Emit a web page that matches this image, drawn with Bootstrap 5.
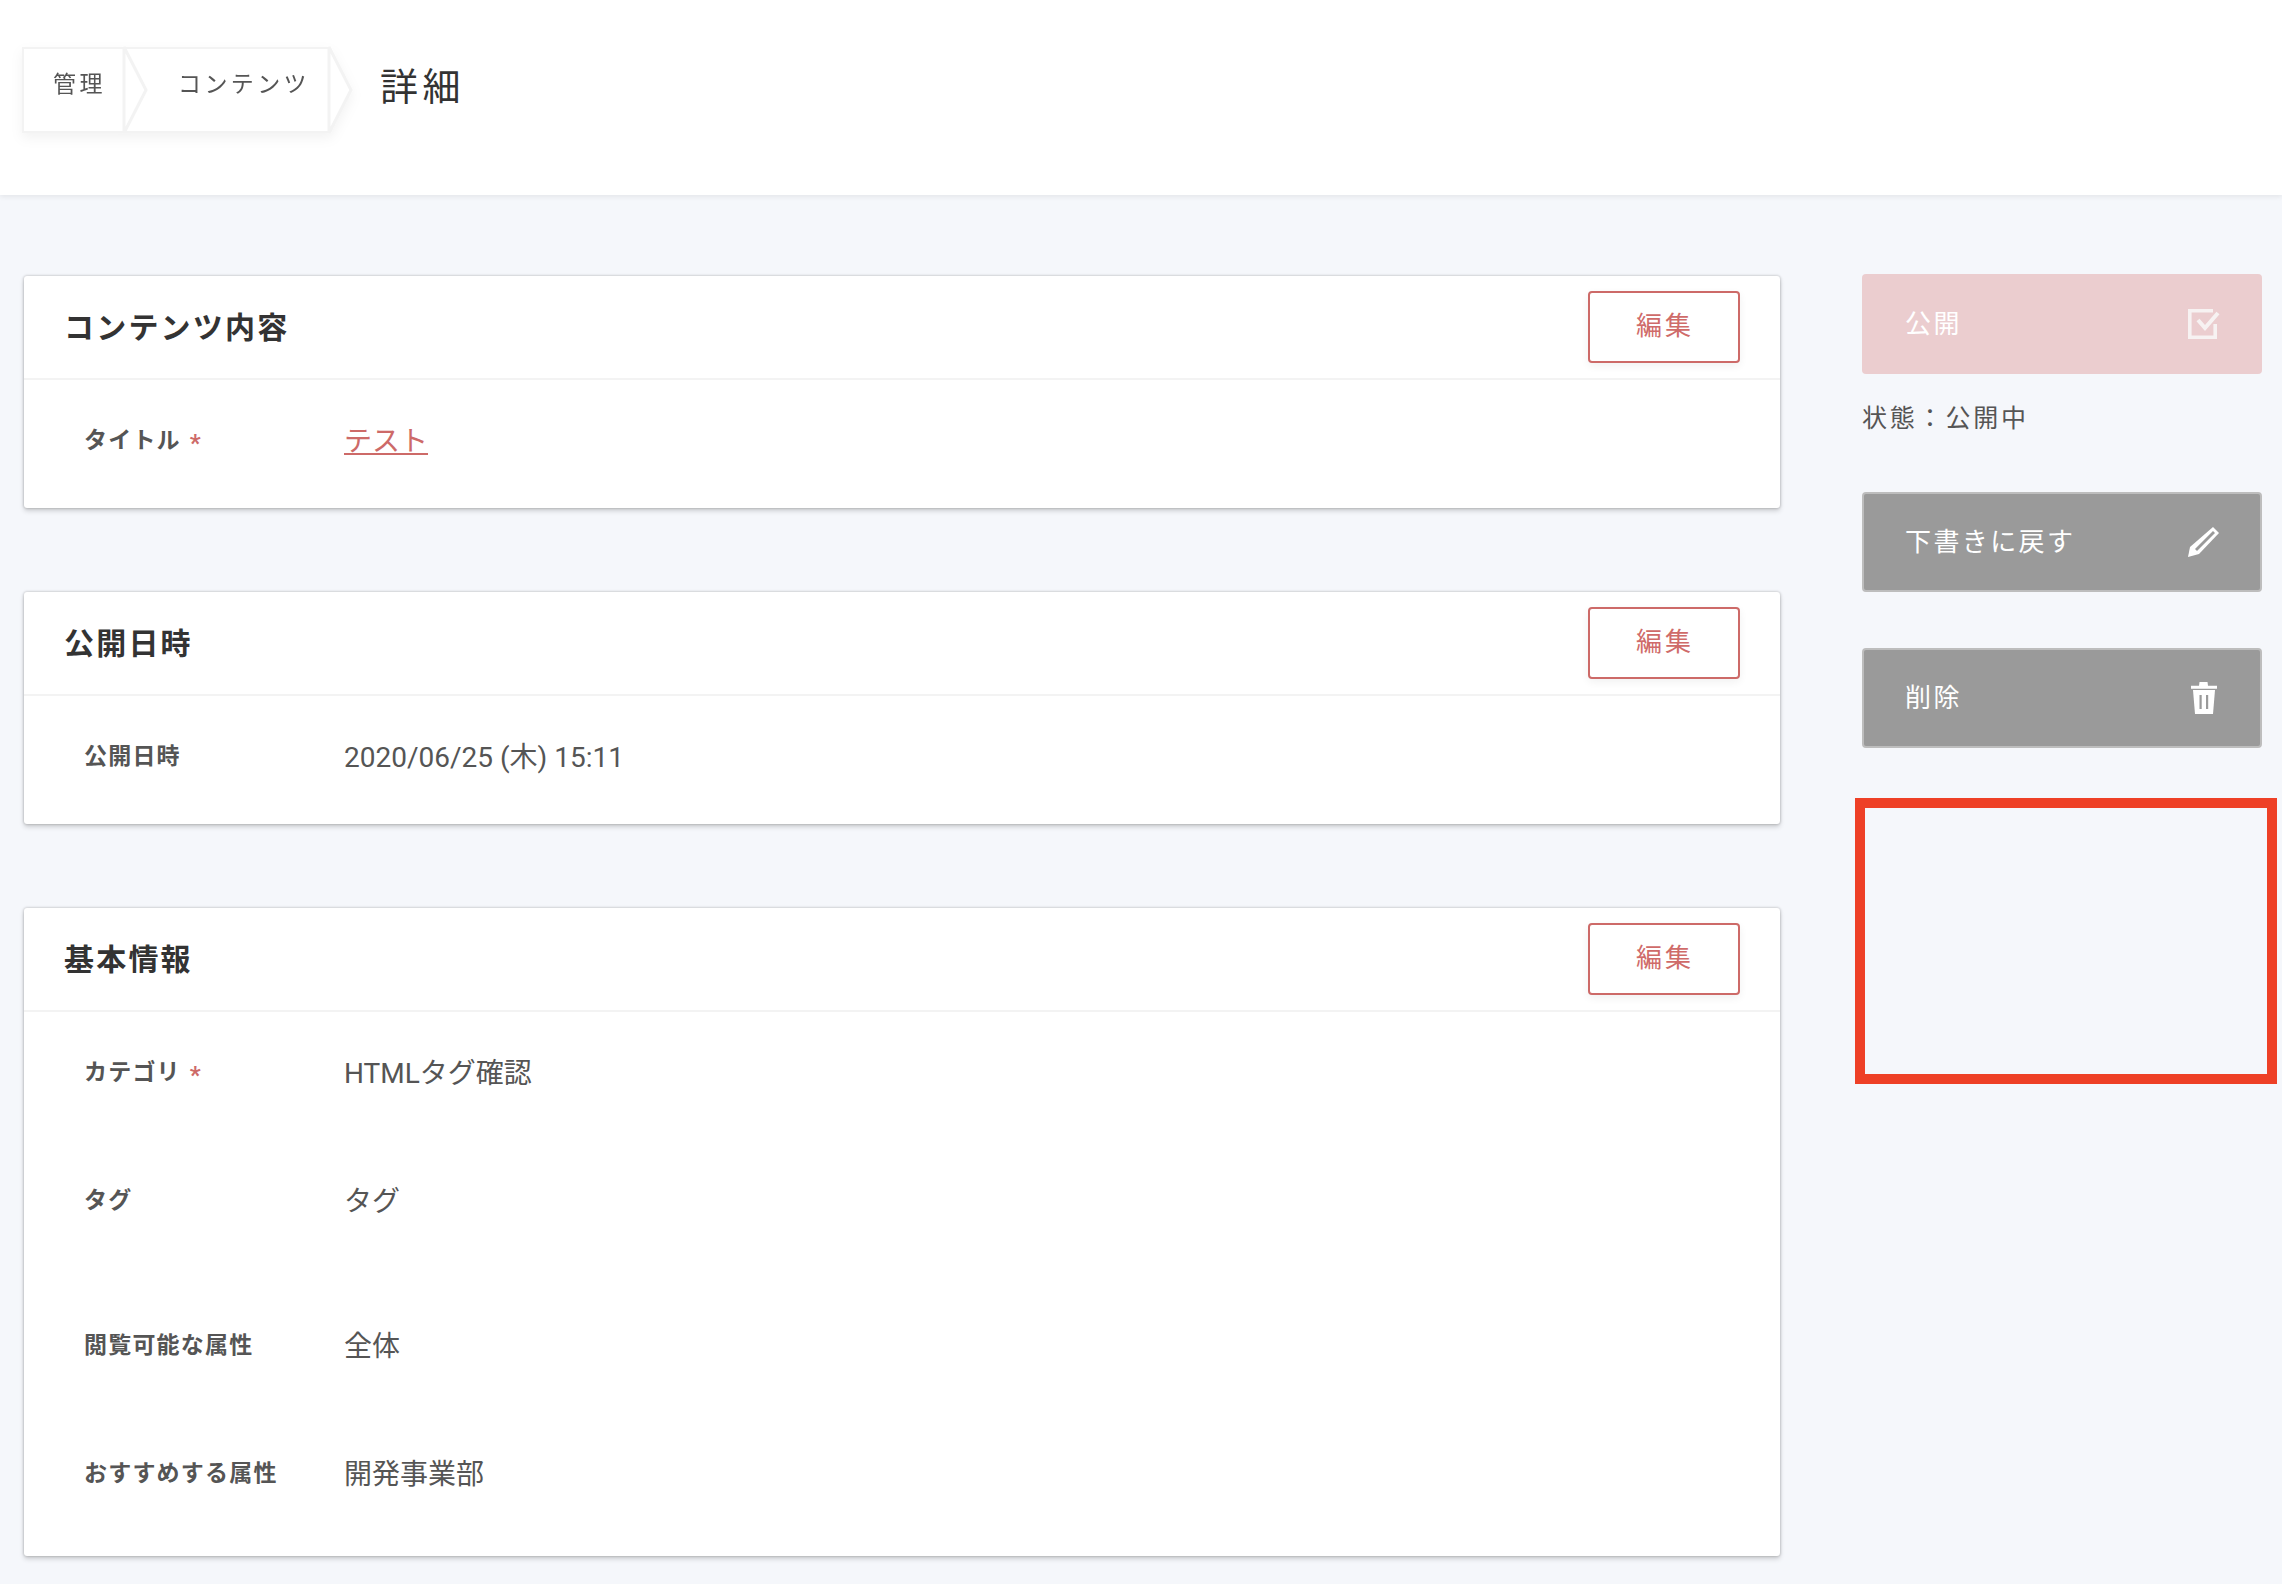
<!doctype html>
<html lang="ja">
<head>
<meta charset="utf-8">
<title>詳細</title>
<link href="https://cdn.jsdelivr.net/npm/bootstrap@5.3.0/dist/css/bootstrap.min.css" rel="stylesheet">
<style>
body{background:#f5f7fb;font-family:Roboto,"Noto Sans CJK JP",sans-serif;color:#555;font-size:28px;margin:0;overflow:hidden}
.top-bar{height:195px;background:#fff;box-shadow:0 2px 5px rgba(0,0,0,.07);padding-left:22px}
.crumbs{height:86px;margin-top:47px;filter:drop-shadow(0 5px 6px rgba(0,0,0,.05))}
.crumb-item{position:relative;height:86px;background:#fff;border-top:2px solid #f3f3f3;border-bottom:2px solid #f3f3f3;font-size:23px;letter-spacing:3.4px;color:#555;line-height:1;padding-top:24px;text-decoration:none}
.crumb-a{width:102px;padding-left:29px;border-left:2px solid #f3f3f3}
.crumb-b{width:205px;padding-left:54px}
.crumb-tip{position:absolute;left:100%;top:-2px;width:23px;height:86px;z-index:1;overflow:visible}
.page-title{font-size:38px;letter-spacing:4.4px;color:#333;margin:0 0 0 51px;font-weight:400;line-height:1;align-self:flex-start;padding-top:68px}
.main-wrap{padding:81px 20px 0 24px;gap:82px}
.left-col{width:1756px}
.panel{background:#fff;border-radius:3px;margin-bottom:84px;box-shadow:0 0 3px rgba(0,0,0,.28),0 3px 5px rgba(0,0,0,.16)}
.panel-head{height:104px;padding:0 40px;border-bottom:2px solid #f3f3f3}
.panel-title{font-size:30px;font-weight:700;letter-spacing:2.2px;color:#333;margin:2px 0 0}
.edit-btn{width:152px;height:72px;background:#fff;border:2px solid #cd6a68;border-radius:4px;color:#cf6b69;font-size:26px;letter-spacing:3px;line-height:1;padding:0 0 3px 2px;box-shadow:0 3px 8px rgba(0,0,0,.06)}
.panel-body-wrap{padding:41px 0 47px 60px}
.info-row{height:40px;line-height:40px;margin-bottom:88px}
.info-row.tall{margin-bottom:105px}
.info-row.only{margin-bottom:0}
.info-row.last{margin-bottom:15px}
.info-label{width:260px;font-size:23px;font-weight:700;color:#555;letter-spacing:1.2px}
.info-star{color:#cd6a68;margin-left:2px;font-size:24px;line-height:0;vertical-align:-3px}
.info-val{font-size:28px;color:#555;padding-top:1px}
.info-val a{color:#cd6a68}
.right-col{width:400px;margin-top:-2px}
.act-btn{height:100px;width:100%;border-radius:4px;font-size:26px;letter-spacing:2.4px;color:#fff;padding:0 42px 0 43px;line-height:1}
.act-pale{background:#ebcdcf;border:0}
.act-gray{background:#9a9a9a;border:2px solid #bdbdbd;padding-left:41px;padding-right:40px}
.act-icon{width:32px;height:32px;flex:none}
.state-text{font-size:25px;letter-spacing:2.8px;color:#555;line-height:40px;margin:25px 0 53px}
.gap-after{margin-bottom:56px}
.mark-box{height:286px;border:10px solid #ee4026;margin:50px -15px 0 -7px}
</style>
</head>
<body>
<header class="top-bar d-flex align-items-center">
  <nav class="crumbs d-flex align-self-start">
    <a class="crumb-item crumb-a d-block" href="#">管理<svg class="crumb-tip" viewBox="0 0 23 86"><polygon points="0,0 22,43 0,86" fill="#fff" stroke="#f3f3f3" stroke-width="3"/></svg></a>
    <a class="crumb-item crumb-b d-block" href="#">コンテンツ<svg class="crumb-tip" viewBox="0 0 23 86"><polygon points="0,0 22,43 0,86" fill="#fff" stroke="#f3f3f3" stroke-width="3"/></svg></a>
  </nav>
  <h1 class="page-title">詳細</h1>
</header>
<main class="main-wrap d-flex align-items-start">
  <div class="left-col">
    <section class="panel">
      <div class="panel-head d-flex align-items-center justify-content-between"><h2 class="panel-title">コンテンツ内容</h2><button class="edit-btn" type="button">編集</button></div>
      <div class="panel-body-wrap">
        <div class="info-row only d-flex"><div class="info-label">タイトル <span class="info-star">*</span></div><div class="info-val"><a href="#">テスト</a></div></div>
      </div>
    </section>
    <section class="panel">
      <div class="panel-head d-flex align-items-center justify-content-between"><h2 class="panel-title">公開日時</h2><button class="edit-btn" type="button">編集</button></div>
      <div class="panel-body-wrap">
        <div class="info-row only d-flex"><div class="info-label">公開日時</div><div class="info-val">2020/06/25 (木) 15:11</div></div>
      </div>
    </section>
    <section class="panel">
      <div class="panel-head d-flex align-items-center justify-content-between"><h2 class="panel-title">基本情報</h2><button class="edit-btn" type="button">編集</button></div>
      <div class="panel-body-wrap">
        <div class="info-row d-flex"><div class="info-label">カテゴリ <span class="info-star">*</span></div><div class="info-val">HTMLタグ確認</div></div>
        <div class="info-row tall d-flex"><div class="info-label">タグ</div><div class="info-val">タグ</div></div>
        <div class="info-row d-flex"><div class="info-label">閲覧可能な属性</div><div class="info-val">全体</div></div>
        <div class="info-row last d-flex"><div class="info-label">おすすめする属性</div><div class="info-val">開発事業部</div></div>
      </div>
    </section>
  </div>
  <aside class="right-col">
    <button class="act-btn act-pale d-flex align-items-center justify-content-between" type="button">公開
      <svg class="act-icon" viewBox="0 0 32 32"><path d="M25 2.8H1.8v26.4h25.4V16" fill="none" stroke="#f7f2f2" stroke-width="3.6"/><path d="M10 12l7 8L30 5" fill="none" stroke="#f7f2f2" stroke-width="4"/></svg></button>
    <p class="state-text">状態：公開中</p>
    <button class="act-btn act-gray gap-after d-flex align-items-center justify-content-between" type="button">下書きに戻す
      <svg class="act-icon" viewBox="0 0 32 32"><path d="M25 1l6 6L11 28 0 31l2-10z" fill="#fff"/><path d="M25 5l2 2L9 25l-2-2z" fill="#9a9a9a"/></svg></button>
    <button class="act-btn act-gray d-flex align-items-center justify-content-between" type="button">削除
      <svg class="act-icon" viewBox="0 0 32 32"><path d="M11.5 0h8l.5 3.7h9v3H3v-3h8z" fill="#fff"/><path d="M5 8h22l-2 24H7z" fill="#fff"/><path d="M11.5 13h2.2v14h-2.2zM18 13h2.2v14H18z" fill="#9a9a9a"/></svg></button>
    <div class="mark-box"></div>
  </aside>
</main>
<script src="https://cdn.jsdelivr.net/npm/bootstrap@5.3.0/dist/js/bootstrap.bundle.min.js"></script>
</body>
</html>
